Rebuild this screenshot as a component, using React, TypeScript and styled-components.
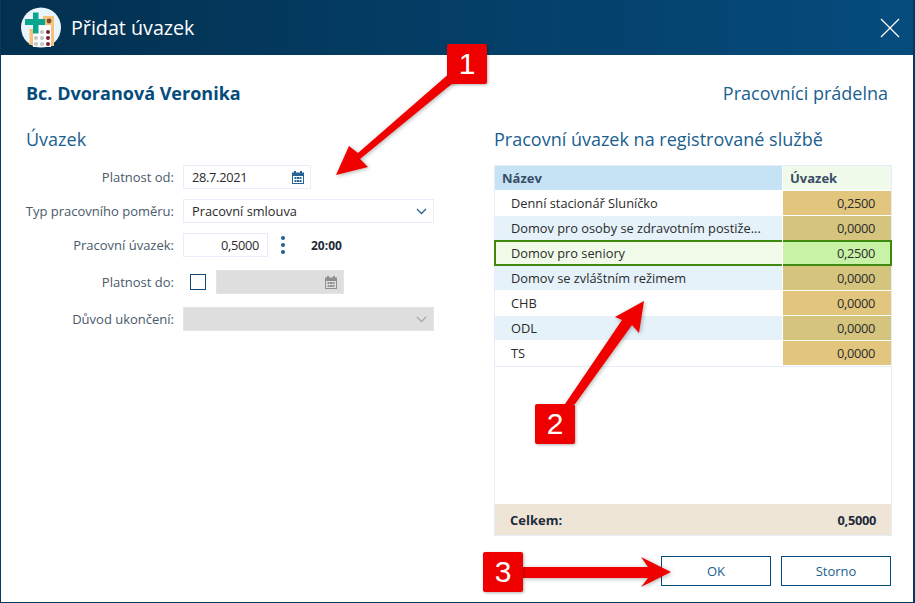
import styled, { createGlobalStyle } from "styled-components";

const rows = [
  { name: "Denní stacionář Sluníčko", value: "0,2500" },
  { name: "Domov pro osoby se zdravotním postiže...", value: "0,0000" },
  { name: "Domov pro seniory", value: "0,2500", selected: true },
  { name: "Domov se zvláštním režimem", value: "0,0000" },
  { name: "CHB", value: "0,0000" },
  { name: "ODL", value: "0,0000" },
  { name: "TS", value: "0,0000" },
];

const CalendarIcon = ({ disabled }: { disabled?: boolean }) => (
  <svg width="12" height="13" viewBox="0 0 12 13">
    <g fill={disabled ? "#8f8f8f" : "#2a6494"}>
      <rect x="2" y="0" width="2" height="2.5" />
      <rect x="8" y="0" width="2" height="2.5" />
      <path d="M0 1.5h12v11.5H0z M1 5v7h10V5z" fillRule="evenodd" />
      <rect x="2.5" y="6" width="2" height="2" />
      <rect x="5" y="6" width="2" height="2" />
      <rect x="7.5" y="6" width="2" height="2" />
      <rect x="2.5" y="9" width="2" height="2" />
      <rect x="5" y="9" width="2" height="2" />
      <rect x="7.5" y="9" width="2" height="2" />
    </g>
  </svg>
);

const Chevron = ({ disabled }: { disabled?: boolean }) => (
  <svg width="11" height="7" viewBox="0 0 11 7">
    <path d="M1 1l4.5 4.5L10 1" fill="none" stroke={disabled ? "#a8a8a8" : "#2a6494"} strokeWidth="1.3" />
  </svg>
);

const App = () => {
  return (
    <>
      <GlobalStyle />
      <Window>
        <TitleBar>
          <TitleLeft>
            <svg width="40" height="41" viewBox="0 0 40 41">
              <circle cx="20" cy="20.5" r="20" fill="#e9f4fb" />
              <path d="M8.5 22h3.5v16H8.5z" fill="#f4c27a" />
              <path d="M22 9h11v30h-3V18H22z" fill="#f4c27a" />
              <path d="M12 18h18v22H12z" fill="#fff" />
              <circle cx="28" cy="14" r="2.4" fill="#7c4a2c" />
              <path d="M12 5.5h5.5v6.5H24v6h-6.5v8.5H12V18H4v-6h8z" fill="#0aa58f" />
              <g fill="#c5c5c5">
                <circle cx="15" cy="31" r="2" />
                <circle cx="15" cy="37" r="2" />
                <circle cx="21" cy="25" r="2" />
                <circle cx="21" cy="31" r="2" />
                <circle cx="21" cy="37" r="2" />
              </g>
              <g fill="#7c1f3a">
                <circle cx="27" cy="25" r="2" />
                <circle cx="27" cy="31" r="2" />
                <circle cx="27" cy="37" r="2" />
              </g>
            </svg>
            <DialogTitle>Přidat úvazek</DialogTitle>
          </TitleLeft>
          <svg width="20" height="20" viewBox="0 0 20 20">
            <path d="M1 1l18 18M19 1L1 19" stroke="#fff" strokeWidth="1.2" fill="none" />
          </svg>
        </TitleBar>

        <Body>
          <HeadRow>
            <PersonName>Bc. Dvoranová Veronika</PersonName>
            <SectionTitle>Pracovníci prádelna</SectionTitle>
          </HeadRow>

          <Columns>
            <FormColumn>
              <SectionTitle>Úvazek</SectionTitle>
              <Form>
                <FormRow>
                  <Label>Platnost od:</Label>
                  <Field $width={128} $digits>
                    28.7.2021
                    <CalendarIcon />
                  </Field>
                </FormRow>
                <FormRow>
                  <Label>Typ pracovního poměru:</Label>
                  <Field $width={251}>
                    Pracovní smlouva
                    <Chevron />
                  </Field>
                </FormRow>
                <FormRow>
                  <Label>Pracovní úvazek:</Label>
                  <NumberField>0,5000</NumberField>
                  <Dots>
                    <i />
                    <i />
                    <i />
                  </Dots>
                  <Hours>20:00</Hours>
                </FormRow>
                <FormRow $top={13}>
                  <Label>Platnost do:</Label>
                  <Checkbox />
                  <Field $width={128} $disabled>
                    <span />
                    <CalendarIcon disabled />
                  </Field>
                </FormRow>
                <FormRow $top={13}>
                  <Label>Důvod ukončení:</Label>
                  <Field $width={251} $disabled>
                    <span />
                    <Chevron disabled />
                  </Field>
                </FormRow>
              </Form>
            </FormColumn>

            <TableColumn>
              <SectionTitle>Pracovní úvazek na registrované službě</SectionTitle>
              <Table>
                <HeaderRow>
                  <HeaderName>Název</HeaderName>
                  <HeaderValue>Úvazek</HeaderValue>
                </HeaderRow>
                <TableRows>
                  {rows.map((row, i) => (
                    <Row key={row.name}>
                      <NameCell $even={i % 2 === 1} $selected={row.selected}>
                        {row.name}
                      </NameCell>
                      <ValueCell $even={i % 2 === 1} $selected={row.selected}>
                        {row.value}
                      </ValueCell>
                    </Row>
                  ))}
                </TableRows>
                <TotalRow>
                  <span>Celkem:</span>
                  <TotalValue>0,5000</TotalValue>
                </TotalRow>
              </Table>
            </TableColumn>
          </Columns>

          <Actions>
            <ActionButton>OK</ActionButton>
            <ActionButton>Storno</ActionButton>
          </Actions>
        </Body>

        <Arrows width="915" height="603" viewBox="0 0 915 603">
          <path d="M451 72L358 153 349 146 336 175 368 167 360 159 459 78z" />
          <path d="M565 404L622 320 615 317 644 301 639 333 632 325 575 404z" />
          <path d="M523 567H648L641 557 671 572 641 587 648 578H523z" />
        </Arrows>
        <Badge $x={447} $y={44}>1</Badge>
        <Badge $x={535} $y={404}>2</Badge>
        <Badge $x={483} $y={552}>3</Badge>
      </Window>
    </>
  );
};

export default App;

const GlobalStyle = createGlobalStyle`
  html, body {
    margin: 0;
    padding: 0;
    background: #fff;
  }
  * {
    box-sizing: border-box;
  }
`;

const Window = styled.div`
  position: relative;
  width: 915px;
  height: 603px;
  overflow: hidden;
  display: flex;
  flex-direction: column;
  background: #fff;
  border-left: 1px solid #043a60;
  border-right: 2px solid #043a60;
  border-bottom: 1px solid #043a60;
  font-family: "Open Sans", sans-serif;
  font-size: 13px;
  color: #2b2b2b;
`;

const TitleBar = styled.header`
  flex: none;
  height: 55px;
  margin: 0 -2px 0 -1px;
  padding: 0 15px 0 21px;
  display: flex;
  align-items: center;
  justify-content: space-between;
  background: linear-gradient(90deg, #03304f 0%, #054c7d 100%);
`;

const TitleLeft = styled.div`
  display: flex;
  align-items: center;
  gap: 10px;
`;

const DialogTitle = styled.h1`
  margin: 0;
  font-size: 19.7px;
  font-weight: 400;
  color: #fff;
`;

const Body = styled.main`
  flex: 1;
  display: flex;
  flex-direction: column;
  padding: 25px 22px 16px 25px;
`;

const HeadRow = styled.div`
  display: flex;
  justify-content: space-between;
  align-items: center;
  height: 26px;
  padding-right: 3px;
`;

const PersonName = styled.h2`
  margin: 0;
  font-size: 18px;
  font-weight: 700;
  color: #054c7d;
`;

const SectionTitle = styled.div`
  font-size: 18px;
  line-height: 24px;
  color: #1a5f8f;
`;

const Columns = styled.div`
  flex: 1;
  display: flex;
  margin-top: 21px;
`;

const FormColumn = styled.section`
  width: 468px;
  flex: none;
`;

const Form = styled.div`
  margin-top: 14px;
  display: flex;
  flex-direction: column;
  gap: 10px;
`;

const FormRow = styled.div<{ $top?: number }>`
  display: flex;
  align-items: center;
  height: 24px;
  margin-top: ${(p) => (p.$top ? p.$top - 10 : 0)}px;
`;

const Label = styled.label`
  width: 157px;
  margin-left: -9px;
  margin-right: 9px;
  flex: none;
  text-align: right;
  white-space: nowrap;
  color: #4a5a6a;
  font-size: 13px;
`;

const Field = styled.div<{ $width: number; $disabled?: boolean; $digits?: boolean }>`
  width: ${(p) => p.$width}px;
  height: 24px;
  padding: 0 6px 0 8px;
  display: flex;
  align-items: center;
  justify-content: space-between;
  border: 1px solid ${(p) => (p.$disabled ? "#e2e4ea" : "#e6ecf8")};
  background: ${(p) => (p.$disabled ? "#dedede" : "#fff")};
  font-size: 12.8px;
  letter-spacing: ${(p) => (p.$digits ? "-0.3px" : "0")};
  color: #2b2b2b;
`;

const NumberField = styled.div`
  width: 85px;
  height: 24px;
  padding: 0 8px;
  line-height: 22px;
  text-align: right;
  border: 1px solid #e6ecf8;
  font-size: 12.8px;
  letter-spacing: -0.3px;
`;

const Dots = styled.div`
  width: 4px;
  margin-left: 13px;
  display: flex;
  flex-direction: column;
  gap: 3px;

  i {
    display: block;
    width: 4px;
    height: 4px;
    border-radius: 50%;
    background: #1f6090;
  }
`;

const Hours = styled.div`
  margin-left: 26px;
  font-size: 12px;
  font-weight: 700;
  color: #1d2b3a;
`;

const Checkbox = styled.div`
  width: 16px;
  height: 16px;
  margin-left: 7px;
  margin-right: 10px;
  border: 1px solid #12477a;
  background: #fff;
`;

const TableColumn = styled.section`
  flex: 1;
  display: flex;
  flex-direction: column;
`;

const Table = styled.div`
  margin: 14px -1px 0 0;
  flex: 1;
  display: flex;
  flex-direction: column;
  border: 1px solid #e6ecf8;
`;

const HeaderRow = styled.div`
  display: flex;
  gap: 1px;
  height: 24px;
  font-weight: 700;
  color: #3a4d66;
`;

const HeaderName = styled.div`
  flex: 1;
  padding-left: 7px;
  line-height: 24px;
  background: #c6e3f6;
`;

const HeaderValue = styled.div`
  width: 108px;
  padding-left: 7px;
  line-height: 24px;
  background: #f0faeb;
`;

const TableRows = styled.div`
  flex: 1;
  padding-top: 1px;
`;

const Row = styled.div`
  display: flex;
  gap: 1px;
  height: 25px;
  padding-bottom: 1px;

  &:nth-child(7) {
    box-shadow: 0 1px 0 #e6ecf8;
  }
`;

const selectedEdge = `
  position: relative;
  z-index: 1;

  &::after {
    content: "";
    position: absolute;
    pointer-events: none;
    border: 2px solid #3f8a0e;
  }
`;

const NameCell = styled.div<{ $even?: boolean; $selected?: boolean }>`
  flex: 1;
  padding-left: 16px;
  line-height: 24px;
  font-size: 12.8px;
  white-space: nowrap;
  color: #2b2b2b;
  background: ${(p) => (p.$selected ? "#f2fbea" : p.$even ? "#e5f2fa" : "#fff")};

  ${(p) =>
    p.$selected &&
    `
    ${selectedEdge}
    &::after {
      inset: -1px 0 -1px -1px;
      border-right: 0;
    }
  `}
`;

const ValueCell = styled.div<{ $even?: boolean; $selected?: boolean }>`
  width: 108px;
  padding-right: 16px;
  line-height: 24px;
  font-size: 12.8px;
  letter-spacing: -0.3px;
  text-align: right;
  color: #2b2b2b;
  background: ${(p) => (p.$selected ? "#c8f2a6" : p.$even ? "#d5c47e" : "#e2c67e")};

  ${(p) =>
    p.$selected &&
    `
    ${selectedEdge}
    &::after {
      inset: -1px -1px -1px 0;
      border-left: 0;
    }
  `}
`;

const TotalRow = styled.div`
  height: 31px;
  padding: 0 15px;
  display: flex;
  align-items: center;
  justify-content: space-between;
  background: #efe5d7;
  font-size: 13px;
  font-weight: 700;
  color: #1d2b3a;
`;

const TotalValue = styled.span`
  font-size: 12.8px;
  letter-spacing: -0.3px;
`;

const Actions = styled.div`
  display: flex;
  justify-content: flex-end;
  gap: 10px;
  margin-top: 20px;
`;

const ActionButton = styled.button`
  width: 110px;
  height: 30px;
  padding: 0;
  background: #fff;
  border: 1px solid #054c7d;
  font-family: inherit;
  font-size: 13px;
  color: #1a5f8f;
`;

const Arrows = styled.svg`
  position: absolute;
  left: -1px;
  top: 0;
  z-index: 2;
  pointer-events: none;
  filter: drop-shadow(1px 1px 2px rgba(0, 0, 0, 0.3));

  path {
    fill: #f10000;
  }
`;

const Badge = styled.div<{ $x: number; $y: number }>`
  position: absolute;
  z-index: 3;
  left: ${(p) => p.$x - 1}px;
  top: ${(p) => p.$y}px;
  width: 40px;
  height: 40px;
  display: flex;
  align-items: center;
  justify-content: center;
  background: #ee0000;
  border-radius: 2px;
  box-shadow: 1px 1px 3px rgba(0, 0, 0, 0.3);
  font-family: "Liberation Sans", Arial, sans-serif;
  font-size: 30px;
  color: #fff;
`;
